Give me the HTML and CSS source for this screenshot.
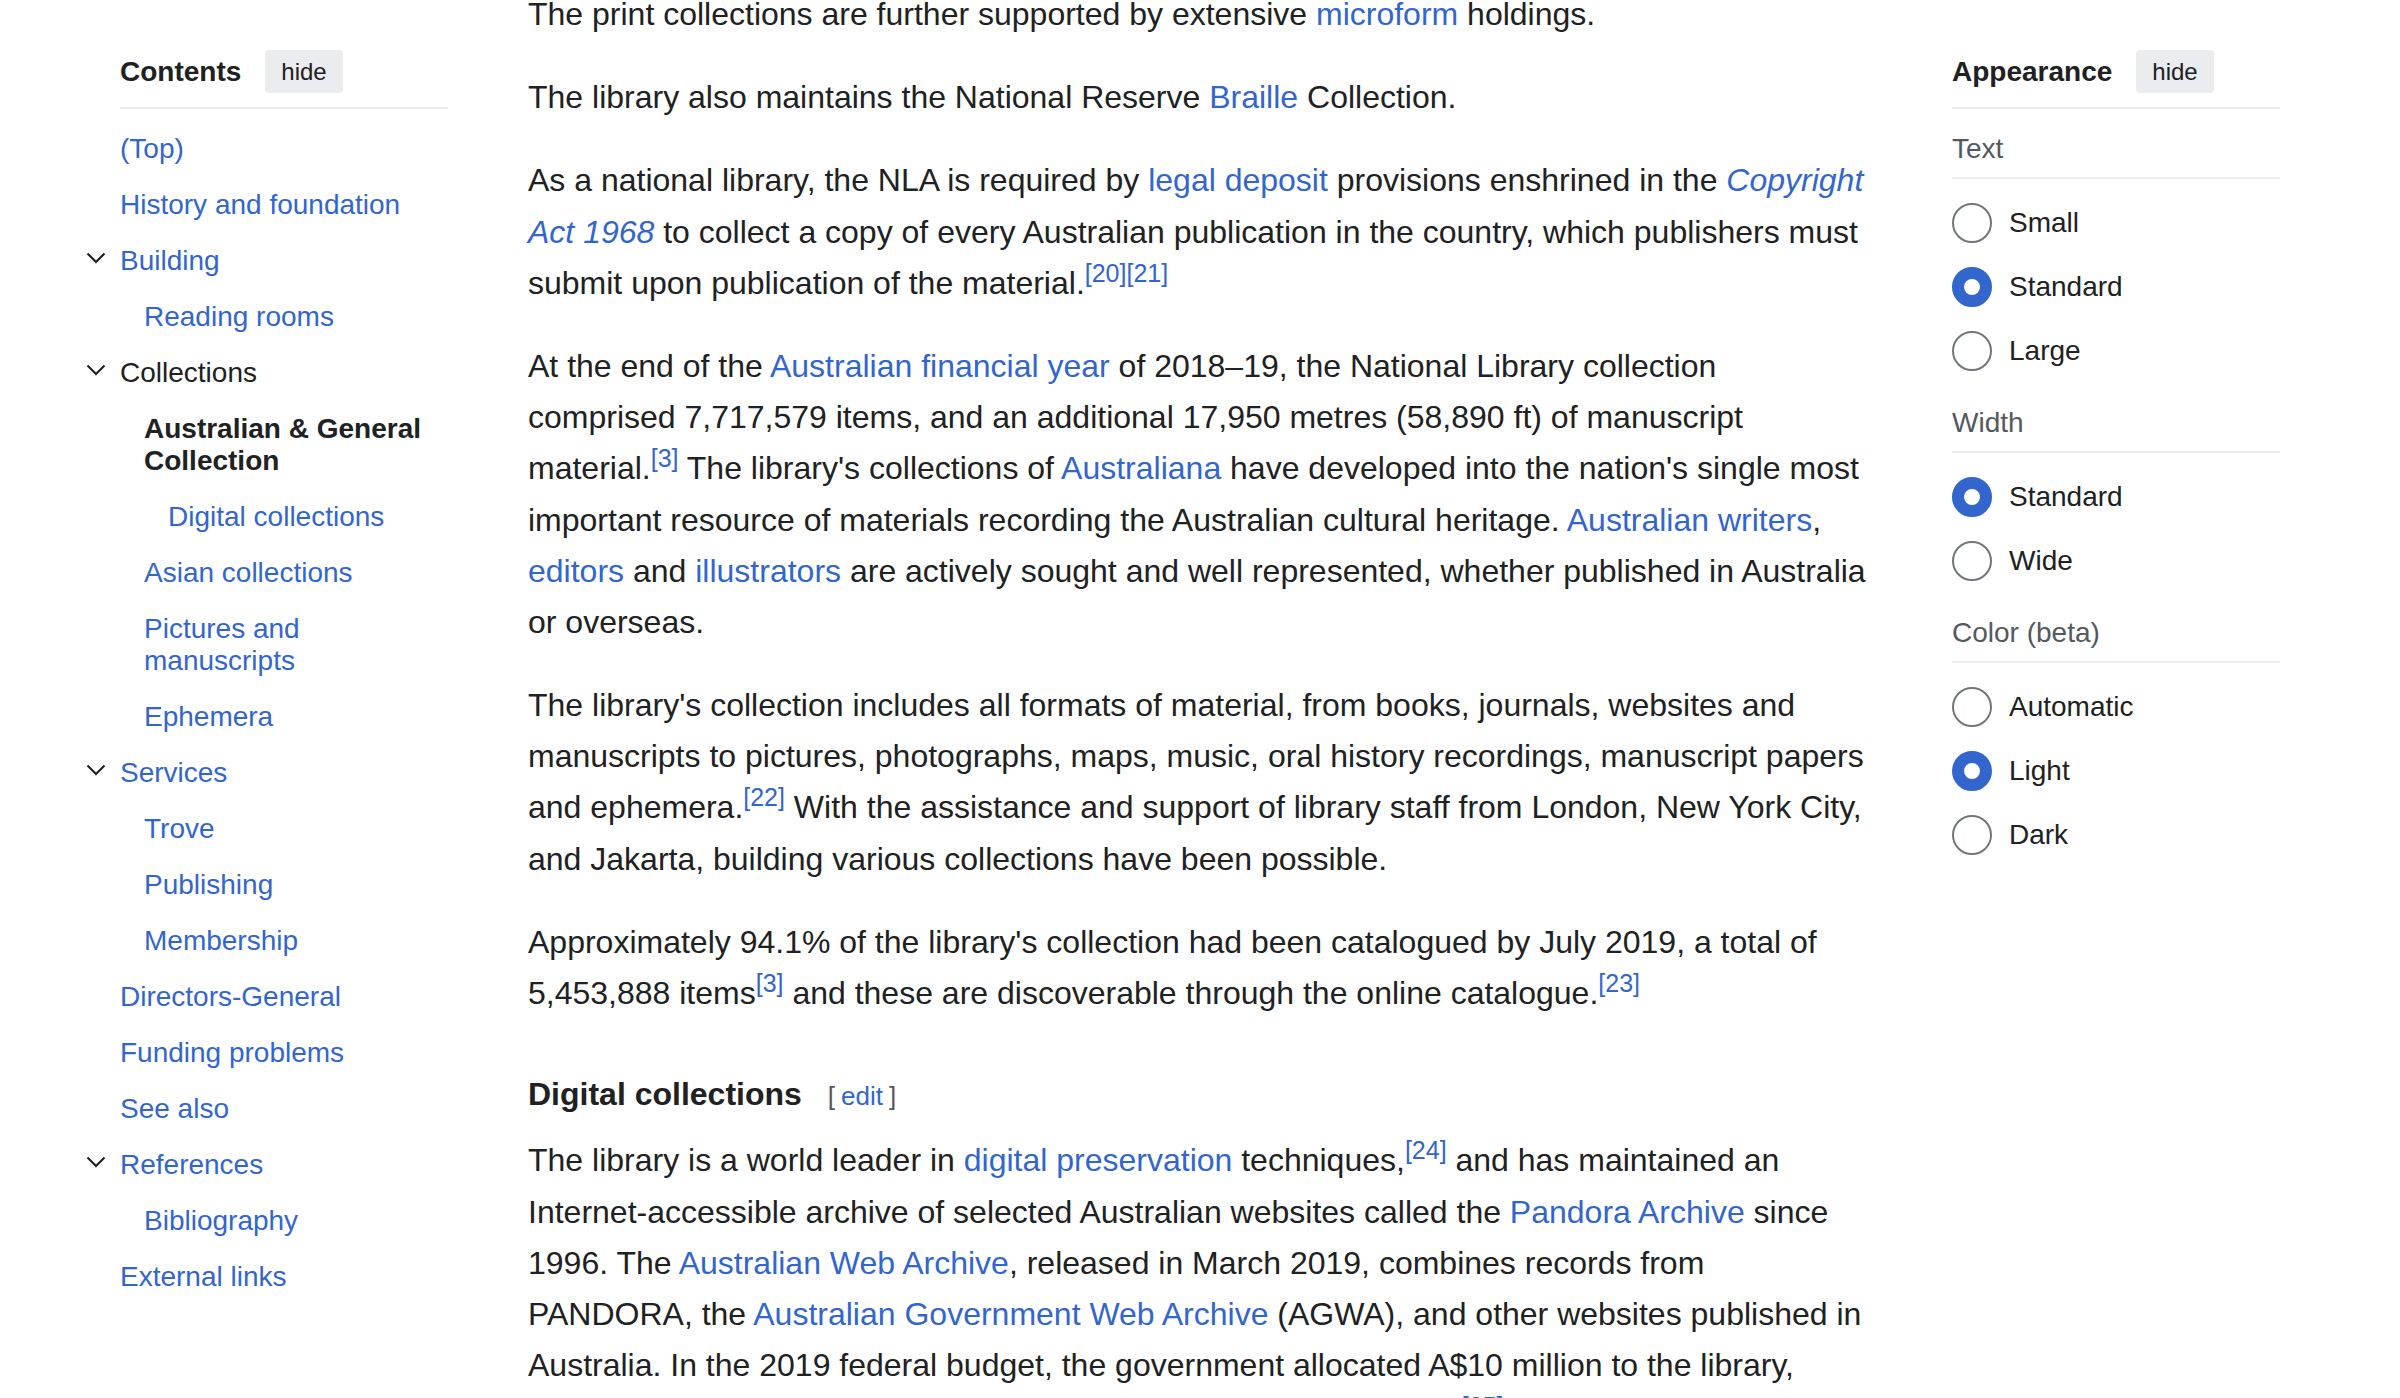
FILE: index.html
```html
<!DOCTYPE html>
<html lang="en">
<head>
<meta charset="utf-8">
<title>National Library of Australia</title>
<link rel="stylesheet" href="styles.css">
</head>
<body>
<div class="page">
  <nav class="toc">
    <div class="panel-head">
      <h2 class="panel-title">Contents</h2>
      <button class="hide-btn" type="button">hide</button>
    </div>
    <ul class="toc-list">
      <li><div class="toc-row"><a href="#">(Top)</a></div></li>
      <li><div class="toc-row"><a href="#">History and foundation</a></div></li>
      <li>
        <div class="toc-row"><span class="toggle"><svg viewBox="0 0 20 20" width="20" height="20"><path d="M1.5 5.5 L10 14 L18.5 5.5" fill="none" stroke="#202122" stroke-width="2.2"/></svg></span><a href="#">Building</a></div>
        <ul>
          <li><div class="toc-row"><a href="#">Reading rooms</a></div></li>
        </ul>
      </li>
      <li>
        <div class="toc-row current"><span class="toggle"><svg viewBox="0 0 20 20" width="20" height="20"><path d="M1.5 5.5 L10 14 L18.5 5.5" fill="none" stroke="#202122" stroke-width="2.2"/></svg></span><a href="#">Collections</a></div>
        <ul>
          <li>
            <div class="toc-row active"><a href="#">Australian &amp; General Collection</a></div>
            <ul>
              <li><div class="toc-row"><a href="#">Digital collections</a></div></li>
            </ul>
          </li>
          <li><div class="toc-row"><a href="#">Asian collections</a></div></li>
          <li><div class="toc-row"><a href="#">Pictures and manuscripts</a></div></li>
          <li><div class="toc-row"><a href="#">Ephemera</a></div></li>
        </ul>
      </li>
      <li>
        <div class="toc-row"><span class="toggle"><svg viewBox="0 0 20 20" width="20" height="20"><path d="M1.5 5.5 L10 14 L18.5 5.5" fill="none" stroke="#202122" stroke-width="2.2"/></svg></span><a href="#">Services</a></div>
        <ul>
          <li><div class="toc-row"><a href="#">Trove</a></div></li>
          <li><div class="toc-row"><a href="#">Publishing</a></div></li>
          <li><div class="toc-row"><a href="#">Membership</a></div></li>
        </ul>
      </li>
      <li><div class="toc-row"><a href="#">Directors-General</a></div></li>
      <li><div class="toc-row"><a href="#">Funding problems</a></div></li>
      <li><div class="toc-row"><a href="#">See also</a></div></li>
      <li>
        <div class="toc-row"><span class="toggle"><svg viewBox="0 0 20 20" width="20" height="20"><path d="M1.5 5.5 L10 14 L18.5 5.5" fill="none" stroke="#202122" stroke-width="2.2"/></svg></span><a href="#">References</a></div>
        <ul>
          <li><div class="toc-row"><a href="#">Bibliography</a></div></li>
        </ul>
      </li>
      <li><div class="toc-row"><a href="#">External links</a></div></li>
    </ul>
  </nav>

  <main class="content">
    <p>The print collections are further supported by extensive <a href="#">microform</a> holdings.</p>
    <p>The library also maintains the National Reserve <a href="#">Braille</a> Collection.</p>
    <p>As a national library, the NLA is required by <a href="#">legal deposit</a> provisions enshrined in the <a href="#"><i>Copyright Act 1968</i></a> to collect a copy of every Australian publication in the country, which publishers must submit upon publication of the material.<sup><a href="#">[20]</a><a href="#">[21]</a></sup></p>
    <p>At the end of the <a href="#">Australian financial year</a> of 2018–19, the National Library collection comprised 7,717,579 items, and an additional 17,950 metres (58,890&nbsp;ft) of manuscript material.<sup><a href="#">[3]</a></sup> The library's collections of <a href="#">Australiana</a> have developed into the nation's single most important resource of materials recording the Australian cultural heritage. <a href="#">Australian writers</a>, <a href="#">editors</a> and <a href="#">illustrators</a> are actively sought and well represented, whether published in Australia or overseas.</p>
    <p>The library's collection includes all formats of material, from books, journals, websites and manuscripts to pictures, photographs, maps, music, oral history recordings, manuscript papers and ephemera.<sup><a href="#">[22]</a></sup> With the assistance and support of library staff from London, New York City, and Jakarta, building various collections have been possible.</p>
    <p>Approximately 94.1% of the library's collection had been catalogued by July 2019, a total of 5,453,888 items<sup><a href="#">[3]</a></sup> and these are discoverable through the online catalogue.<sup><a href="#">[23]</a></sup></p>
    <h3 class="section-heading">Digital collections<span class="editsection"><span class="bracket bracket-l">[</span><a href="#">edit</a><span class="bracket bracket-r">]</span></span></h3>
    <p>The library is a world leader in <a href="#">digital preservation</a> techniques,<sup><a href="#">[24]</a></sup> and has maintained an Internet-accessible archive of selected Australian websites called the <a href="#">Pandora Archive</a> since 1996. The <a href="#">Australian Web Archive</a>, released in March 2019, combines records from PANDORA, the <a href="#">Australian Government Web Archive</a> (AGWA), and other websites published in Australia. In the 2019 federal budget, the government allocated A$10 million to the library, which will be spent over four years on digitisation of the collection.<sup><a href="#">[25]</a></sup></p>
  </main>

  <aside class="appearance">
    <div class="panel-head">
      <h2 class="panel-title">Appearance</h2>
      <button class="hide-btn" type="button">hide</button>
    </div>
    <div class="app-section first">
      <div class="app-label">Text</div>
      <div class="options">
        <div class="option"><span class="radio"></span><span>Small</span></div>
        <div class="option"><span class="radio checked"></span><span>Standard</span></div>
        <div class="option"><span class="radio"></span><span>Large</span></div>
      </div>
    </div>
    <div class="app-section">
      <div class="app-label">Width</div>
      <div class="options">
        <div class="option"><span class="radio checked"></span><span>Standard</span></div>
        <div class="option"><span class="radio"></span><span>Wide</span></div>
      </div>
    </div>
    <div class="app-section">
      <div class="app-label">Color (beta)</div>
      <div class="options">
        <div class="option"><span class="radio"></span><span>Automatic</span></div>
        <div class="option"><span class="radio checked"></span><span>Light</span></div>
        <div class="option"><span class="radio"></span><span>Dark</span></div>
      </div>
    </div>
  </aside>
</div>
</body>
</html>
```

FILE: styles.css
```css
* { box-sizing: border-box; }

html, body {
  margin: 0;
  padding: 0;
  height: 100%;
  overflow: hidden;
  background: #ffffff;
}

body {
  font-family: "Liberation Sans", Arial, Helvetica, sans-serif;
  color: #202122;
}

a {
  color: #3366cc;
  text-decoration: none;
}

.page {
  display: flex;
  align-items: flex-start;
  padding-left: 120px;
}

/* ---------- side panels ---------- */
.toc,
.appearance {
  width: 328px;
  flex: none;
  padding-top: 50px;
  font-size: 28px;
}

.appearance {
  margin-left: 84px;
}

.panel-head {
  display: flex;
  align-items: center;
  gap: 24px;
  padding-bottom: 14px;
  border-bottom: 2px solid #eaecf0;
}

.panel-title {
  margin: 0;
  font-size: 28px;
  font-weight: bold;
  line-height: 32px;
}

.hide-btn {
  height: 43px;
  padding: 0 16px;
  border: 0;
  border-radius: 4px;
  background: #eaecf0;
  font-family: inherit;
  font-size: 24px;
  color: #202122;
}

/* ---------- table of contents ---------- */
.toc-list,
.toc-list ul {
  list-style: none;
  margin: 0;
  padding: 0;
}

.toc-list {
  margin-top: 12px;
}

.toc-list ul {
  padding-left: 24px;
}

.toc-row {
  display: flex;
  align-items: flex-start;
  padding: 12px 0;
  line-height: 32px;
}

.toggle {
  flex: none;
  width: 20px;
  height: 20px;
  margin: 2.5px 14px 0 -34px;
}

.toggle svg {
  display: block;
}

.toc-row.current a {
  color: #202122;
}

.toc-row.active a {
  color: #202122;
  font-weight: bold;
}

/* ---------- article ---------- */
.content {
  width: 1340px;
  flex: none;
  margin-left: 80px;
  margin-top: -11px;
  font-size: 32px;
  line-height: 1.6;
}

.content p {
  margin: 0 0 32px;
}

.content sup {
  font-size: 25px;
  line-height: 1;
  vertical-align: super;
}

.section-heading {
  margin: 49.5px 0 15.5px;
  font-size: 32px;
  font-weight: bold;
  line-height: 1.6;
}

.editsection {
  margin-left: 26px;
  font-size: 26px;
  font-weight: normal;
}

.bracket {
  color: #54595d;
}

.bracket-l {
  margin-right: 6px;
}

.bracket-r {
  margin-left: 6px;
}

/* ---------- appearance ---------- */
.app-section {
  margin-top: 36px;
}

.app-section.first {
  margin-top: 24px;
}

.app-label {
  color: #54595d;
  line-height: 32px;
  padding-bottom: 12px;
  border-bottom: 2px solid #eaecf0;
}

.options {
  display: flex;
  flex-direction: column;
  gap: 24px;
  margin-top: 24px;
}

.option {
  display: flex;
  align-items: center;
  gap: 17px;
  height: 40px;
}

.radio {
  flex: none;
  width: 40px;
  height: 40px;
  border-radius: 50%;
  border: 2px solid #72777d;
  background: #ffffff;
}

.radio.checked {
  border: 12px solid #3366cc;
}
```
